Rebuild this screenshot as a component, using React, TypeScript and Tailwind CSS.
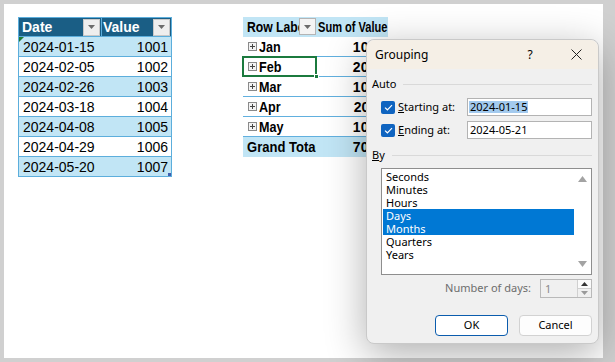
import React from "react";

const dates = [
  ["2024-01-15", "1001"],
  ["2024-02-05", "1002"],
  ["2024-02-26", "1003"],
  ["2024-03-18", "1004"],
  ["2024-04-08", "1005"],
  ["2024-04-29", "1006"],
  ["2024-05-20", "1007"],
];

const pivot = [
  ["Jan", "1001"],
  ["Feb", "2005"],
  ["Mar", "1004"],
  ["Apr", "2011"],
  ["May", "1007"],
];

function FilterBtn({ light }: { light?: boolean }) {
  return (
    <div
      className={
        "w-[17px] h-[17px] flex items-center justify-center border " +
        (light ? "bg-[#f4f4f4] border-[#b4b4b4]" : "bg-[#eeeeee] border-[#c8c8c8]")
      }
    >
      <svg width="7" height="4" viewBox="0 0 7 4">
        <path d="M0 0 L7 0 L3.5 4 Z" fill="#6b6b6b" />
      </svg>
    </div>
  );
}

function PlusBox() {
  return (
    <div className="w-[9px] h-[9px] shrink-0 border border-[#8a8a8a] bg-[#f2f2f2] flex items-center justify-center">
      <svg width="7" height="7" viewBox="0 0 7 7">
        <path d="M1 3.5 H6 M3.5 1 V6" stroke="#444" strokeWidth="1" />
      </svg>
    </div>
  );
}

function Check() {
  return (
    <div className="w-[14px] h-[13px] rounded-[2px] bg-[#0f64c0] flex items-center justify-center">
      <svg width="9" height="7" viewBox="0 0 9 7">
        <path d="M1 3.6 L3.4 5.8 L8 1.2" stroke="#ffffff" strokeWidth="1.2" fill="none" />
      </svg>
    </div>
  );
}

export default function App() {
  const xl = { fontFamily: '"Liberation Sans", Arial, sans-serif' };
  const ui = { fontFamily: '"Noto Sans", "Open Sans", sans-serif' };
  return (
    <div className="w-[615px] h-[362px] bg-[#d0d0d0] pt-[4px] pl-[4px] pr-[12px] pb-[4px]">
      <div className="relative w-full h-full bg-white flex items-start pl-[14px] pt-[13px]" style={xl}>
        {/* Source table */}
        <div className="w-[154px] border-l border-r border-t border-[#5caedc] text-[14px] text-black">
          <div className="h-[19px] flex border-b border-[#5caedc] bg-[#1a5e85] text-white font-bold">
            <div className="w-[83px] flex items-center justify-between pl-[3px] pr-[1px] border-r border-[#5caedc]">
              <span className="leading-[19px]">Date</span>
              <FilterBtn />
            </div>
            <div className="flex-1 flex items-center justify-between pl-[1px] pr-[1px]">
              <span className="leading-[19px]">Value</span>
              <FilterBtn />
            </div>
          </div>
          {dates.map(([d, v], i) => (
            <div
              key={d}
              className={
                "relative h-[20px] flex border-b border-[#5caedc] leading-[20px] " +
                (i % 2 === 0 ? "bg-[#c1e5f5]" : "bg-white")
              }
            >
              {i === 0 && (
                <div className="absolute left-0 top-0 w-0 h-0 border-t-[5px] border-t-[#1e7b34] border-r-[5px] border-r-transparent" />
              )}
              {i === dates.length - 1 && (
                <div className="absolute right-0 bottom-0 w-[3px] h-[3px] bg-[#3f5dad]" />
              )}
              <div className="w-[83px] pl-[4px]">{d}</div>
              <div className="flex-1 text-right pr-[3px]">{v}</div>
            </div>
          ))}
        </div>

        {/* Pivot table */}
        <div className="ml-[71px] w-[145px] text-[14px] font-bold text-black">
          <div className="h-[20px] flex bg-[#c1e5f5] leading-[20px]">
            <div className="relative w-[73px] overflow-hidden pl-[4px] whitespace-nowrap">
              <span className="inline-block origin-left scale-x-[0.87]">Row Labels</span>
              <div className="absolute right-0 top-[1px]">
                <FilterBtn light />
              </div>
            </div>
            <div className="flex-1 pl-[2px] whitespace-nowrap overflow-hidden">
              <span className="inline-block origin-left scale-x-[0.79]">Sum of Value</span>
            </div>
          </div>
          {pivot.map(([m, v], i) => (
            <div key={m} className="relative h-[20px] flex border-b border-[#61b0df] leading-[20px]">
              <div className="w-[73px] flex items-center pl-[5px] gap-[2px]">
                <PlusBox />
                <span className="inline-block origin-left scale-x-[0.9]">{m}</span>
              </div>
              <div className="flex-1 text-right pr-[4px]">{v}</div>
              {i === 1 && (
                <div className="absolute left-[-1px] top-[-1px] w-[75px] h-[21px] border-2 border-[#1b7a3e]">
                  <div className="absolute right-[-4px] bottom-[-4px] w-[5px] h-[5px] bg-[#1b7a3e] border border-white" />
                </div>
              )}
            </div>
          ))}
          <div className="h-[20px] flex bg-[#c1e5f5] leading-[20px]">
            <div className="w-[73px] pl-[4px] whitespace-nowrap overflow-hidden">
              <span className="inline-block origin-left scale-x-[0.93]">Grand Total</span>
            </div>
            <div className="flex-1 text-right pr-[4px]">7028</div>
          </div>
        </div>

        {/* Grouping dialog */}
        <div
          className="absolute left-[362px] top-[35px] w-[233px] h-[305px] rounded-[8px] border border-[#c9c9c9] bg-[#f0f0f0] shadow-[0_10px_40px_rgba(0,0,0,0.32)] text-[11px] text-black flex flex-col"
          style={ui}
        >
          <div className="h-[29px] shrink-0 rounded-t-[8px] bg-[#f5efe6] flex items-center pl-[8px]">
            <span className="text-[12px] flex-1">Grouping</span>
            <span className="text-[12px] w-[12px] text-center mr-[18px]">?</span>
            <div className="w-[44px] flex justify-center">
              <svg width="11" height="11" viewBox="0 0 11 11">
                <path d="M0.5 0.5 L10.5 10.5 M10.5 0.5 L0.5 10.5" stroke="#222" strokeWidth="1" />
              </svg>
            </div>
          </div>
          <div className="flex flex-col pl-[5px] pr-[6px]">
            <div className="mt-[8px] h-[14px] flex items-center">
              <span>Auto</span>
              <div className="flex-1 ml-[7px] h-px bg-[#d9d9d9]" />
            </div>
            <div className="mt-[7px] h-[18px] flex items-center pl-[9px]">
              <Check />
              <span className="ml-[3px] w-[69px]">
                <span className="underline">S</span>tarting at:
              </span>
              <div className="flex-1 h-[18px] bg-white border border-[#b3b3b3] flex items-center pl-[1px]">
                <span className="bg-[#a3caee] leading-[12px] px-[1px]">2024-01-15</span>
              </div>
            </div>
            <div className="mt-[5px] h-[18px] flex items-center pl-[9px]">
              <Check />
              <span className="ml-[3px] w-[69px]">
                <span className="underline">E</span>nding at:
              </span>
              <div className="flex-1 h-[18px] bg-white border border-[#b3b3b3] flex items-center pl-[2px]">
                <span>2024-05-21</span>
              </div>
            </div>
            <div className="mt-[9px] h-[14px] flex items-center">
              <span className="underline">B</span>
              <span>y</span>
              <div className="flex-1 ml-[7px] h-px bg-[#d9d9d9]" />
            </div>
            <div className="mt-[6px] ml-[9px] h-[107px] bg-white border border-[#8e8e8e] flex">
              <div className="flex-1 pt-[1px] pl-[1px]">
                {["Seconds", "Minutes", "Hours", "Days", "Months", "Quarters", "Years"].map((t) => {
                  const sel = t === "Days" || t === "Months";
                  return (
                    <div
                      key={t}
                      className={
                        "h-[13px] leading-[13px] pl-[3px] " + (sel ? "bg-[#0078d4] text-white" : "text-black")
                      }
                    >
                      {t}
                    </div>
                  );
                })}
              </div>
              <div className="w-[17px] flex flex-col items-center justify-between pt-[7px] pb-[7px]">
                <svg width="9" height="6" viewBox="0 0 9 6">
                  <path d="M0 6 L4.5 0 L9 6 Z" fill="#a3a3a3" />
                </svg>
                <svg width="9" height="6" viewBox="0 0 9 6">
                  <path d="M0 0 L9 0 L4.5 6 Z" fill="#a3a3a3" />
                </svg>
              </div>
            </div>
            <div className="mt-[4px] h-[19px] flex items-center justify-end">
              <span className="text-[#6d6d6d] mr-[9px]">Number of days:</span>
              <div className="w-[52px] h-[19px] border border-[#b9b9b9] bg-[#f0f0f0] flex">
                <span className="flex-1 pl-[4px] leading-[17px] text-[#8a8a8a]">1</span>
                <div className="w-[14px] flex flex-col border-l border-[#d0d0d0]">
                  <div className="flex-1 flex items-center justify-center bg-[#fafafa] border-b border-[#d0d0d0]">
                    <svg width="7" height="4" viewBox="0 0 7 4">
                      <path d="M0 4 L3.5 0 L7 4 Z" fill="#333" />
                    </svg>
                  </div>
                  <div className="flex-1 flex items-center justify-center bg-[#f0f0f0]">
                    <svg width="7" height="4" viewBox="0 0 7 4">
                      <path d="M0 0 L7 0 L3.5 4 Z" fill="#9a9a9a" />
                    </svg>
                  </div>
                </div>
              </div>
            </div>
            <div className="mt-[17px] flex justify-end gap-[11px]">
              <div className="w-[73px] h-[21px] rounded-[4px] border border-[#0b5cad] bg-white flex items-center justify-center text-[11px]">
                OK
              </div>
              <div className="w-[73px] h-[21px] rounded-[4px] border border-[#d2d2d2] bg-[#fdfdfd] flex items-center justify-center text-[11px]">
                Cancel
              </div>
            </div>
          </div>
        </div>
      </div>
    </div>
  );
}
